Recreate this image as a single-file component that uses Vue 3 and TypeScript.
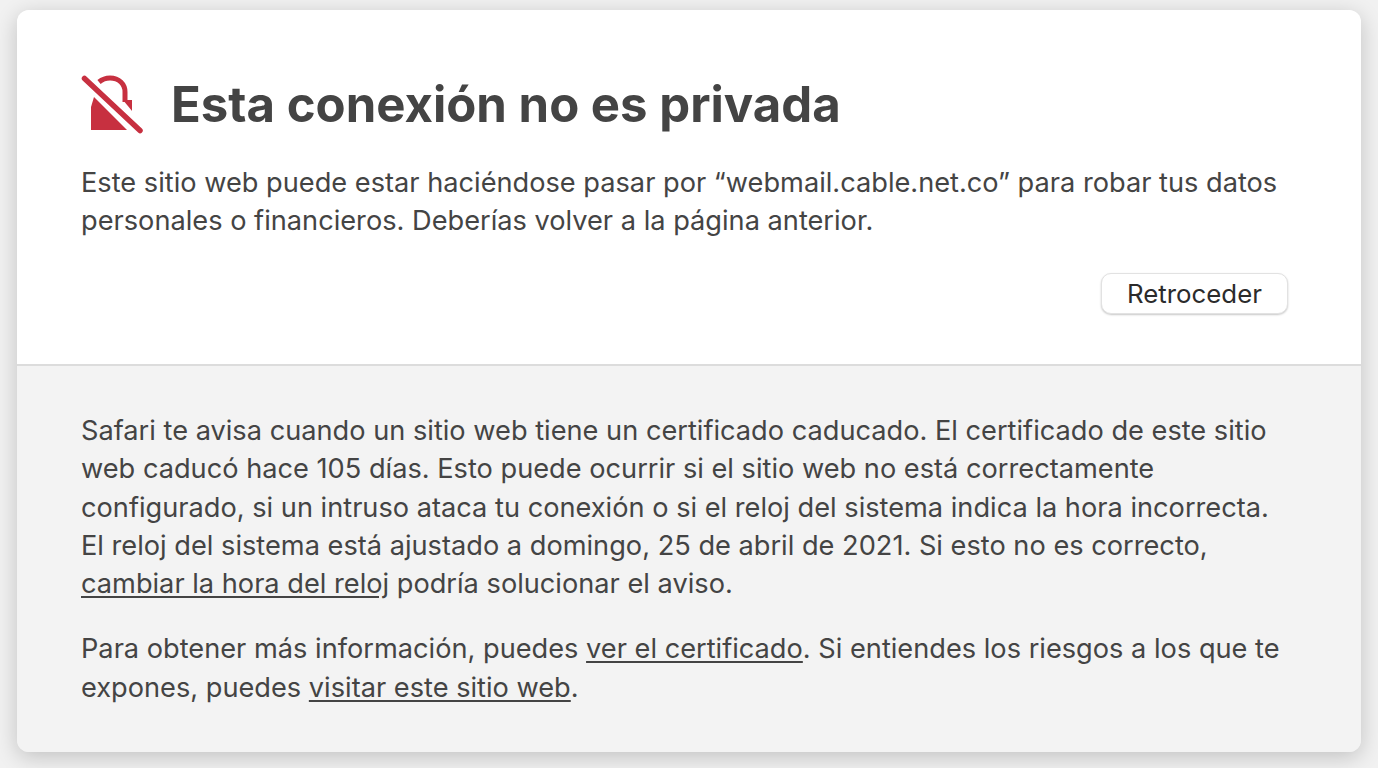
<script setup lang="ts">
const host: string = "webmail.cable.net.co";
</script>

<template>
  <main class="page">
    <section class="card">
      <div class="top">
        <header class="head">
          <svg class="icon" width="62" height="62" viewBox="0 0 62 62" aria-hidden="true">
            <path d="M10 34 L13 24 L46 57 L10 57 Z" fill="#c73040" />
            <path d="M42 27 L51 27 L51 38 Z" fill="#c73040" />
            <path d="M18 9 C21 6.500 25 5 29 5 C38 5 44 11 44 19 L44 29" fill="none" stroke="#c73040" stroke-width="5" />
            <path d="M3.500 5.500 L59 57.500" stroke="#fff" stroke-width="10" />
            <path d="M3.500 5.500 L59 57.500" stroke="#c73040" stroke-width="5.500" stroke-linecap="round" />
          </svg>
          <h1 class="title">Esta conexión no es privada</h1>
        </header>
        <p class="text">Este sitio web puede estar haciéndose pasar por “{{ host }}” para robar tus datos<br />personales o financieros. Deberías volver a la página anterior.</p>
        <div class="actions">
          <button class="back" type="button">Retroceder</button>
        </div>
      </div>
      <div class="bottom">
        <p class="text">Safari te avisa cuando un sitio web tiene un certificado caducado. El certificado de este sitio<br />web caducó hace 105 días. Esto puede ocurrir si el sitio web no está correctamente<br />configurado, si un intruso ataca tu conexión o si el reloj del sistema indica la hora incorrecta.<br />El reloj del sistema está ajustado a domingo, 25 de abril de 2021. Si esto no es correcto,<br /><a href="#">cambiar la hora del reloj</a> podría solucionar el aviso.</p>
        <p class="text para">Para obtener más información, puedes <a href="#">ver el certificado</a>. Si entiendes los riesgos a los que te<br />expones, puedes <a href="#">visitar este sitio web</a>.</p>
      </div>
    </section>
  </main>
</template>

<style>
html, body { margin: 0; background: #f1f1f1; }
</style>

<style scoped>
.page {
  width: 1378px;
  height: 768px;
  box-sizing: border-box;
  padding: 10px 17px 16px;
  overflow: hidden;
  background: #f1f1f1;
  font-family: Inter, "Liberation Sans", sans-serif;
}
.card {
  height: 742px;
  display: flex;
  flex-direction: column;
  border-radius: 12px;
  overflow: hidden;
  box-shadow: 0 5px 22px rgba(0, 0, 0, 0.2);
}
.top {
  height: 356px;
  box-sizing: border-box;
  padding: 60px 73px 0 64px;
  background: #fff;
  border-bottom: 2px solid #dcdcdc;
}
.head {
  display: flex;
  align-items: center;
  gap: 28px;
  height: 68px;
  margin-bottom: 26px;
}
.icon { flex: none; }
.title {
  margin: 0;
  font-size: 49.100px;
  line-height: 68px;
  font-weight: 700;
  color: #444;
  white-space: nowrap;
}
.text {
  margin: 0;
  font-size: 27.200px;
  line-height: 38.300px;
  color: #444;
  white-space: nowrap;
}
.text a { color: inherit; text-decoration: underline; text-underline-offset: 3px; }
.actions { display: flex; justify-content: flex-end; margin-top: 32px; }
.back {
  width: 187px;
  height: 41px;
  padding: 0;
  font-family: inherit;
  font-size: 25.800px;
  color: #2b2b2b;
  background: #fff;
  border: 1px solid #e2e2e2;
  border-radius: 10px;
  box-shadow: 0 1px 2px rgba(0, 0, 0, 0.22);
}
.bottom {
  flex: 1;
  padding: 46px 60px 0 64px;
  background: #f3f3f3;
}
.para { margin-top: 27px; }
</style>
